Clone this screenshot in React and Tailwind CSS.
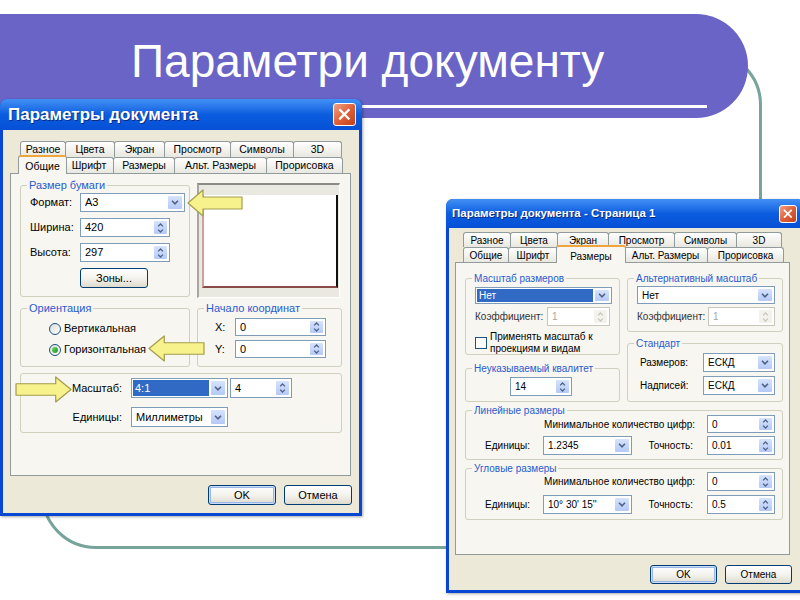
import React from "react";

const L1 = [
  ["Разное", "w-[46px]"],
  ["Цвета", "w-[50px]"],
  ["Экран", "w-[51px]"],
  ["Просмотр", "w-[67px]"],
  ["Символы", "w-[64px]"],
  ["3D", "w-[49px]"],
];
const L2 = [
  ["Общие", "w-[49px]", true],
  ["Шрифт", "w-[50px]"],
  ["Размеры", "w-[62px]"],
  ["Альт. Размеры", "w-[93px]"],
  ["Прорисовка", "w-[77px]"],
];
const R1 = [
  ["Разное", "w-[48px]"],
  ["Цвета", "w-[48px]"],
  ["Экран", "w-[52px]"],
  ["Просмотр", "w-[67px]"],
  ["Символы", "w-[63px]"],
  ["3D", "w-[46px]"],
];
const R2 = [
  ["Общие", "w-[46px]"],
  ["Шрифт", "w-[50px]"],
  ["Размеры", "w-[70px]", true],
  ["Альт. Размеры", "w-[85px]"],
  ["Прорисовка", "w-[77px]"],
];

function Chev({ up, className = "" }) {
  return (
    <svg viewBox="0 0 8 5" className={className}>
      <path
        d={up ? "M1 4.2L4 1.2L7 4.2" : "M1 0.8L4 3.8L7 0.8"}
        fill="none"
        stroke="currentColor"
        strokeWidth="1.6"
      />
    </svg>
  );
}

function Combo({ value, selected, className = "" }) {
  return (
    <div className={`flex items-stretch bg-white border border-[#7f9db9] p-[1px] ${className}`}>
      <div className="flex-1 flex items-stretch min-w-0">
        {selected ? (
          <span className="flex-1 flex items-center bg-[#316ac5] text-white pl-[2px] mr-[1px]">{value}</span>
        ) : (
          <span className="flex items-center pl-[3px] whitespace-nowrap">{value}</span>
        )}
      </div>
      <div className="w-[16px] shrink-0 flex items-center justify-center rounded-[2px] border border-white bg-gradient-to-b from-[#d6e3fd] to-[#b4c9f6] text-[#4d6185]">
        <Chev className="w-[8px] h-[5px]" />
      </div>
    </div>
  );
}

function Spin({ value, disabled, className = "" }) {
  return (
    <div
      className={`flex items-stretch bg-white border p-[1px] ${
        disabled ? "border-[#c9c7ba] text-[#aca899]" : "border-[#7f9db9]"
      } ${className}`}
    >
      <div className="flex-1 flex items-center pl-[3px]">{value}</div>
      <div
        className={`w-[15px] shrink-0 flex flex-col items-center justify-center gap-[2px] rounded-[2px] border border-white ${
          disabled ? "bg-[#f3f2ec] text-[#c9c7ba]" : "bg-gradient-to-b from-[#d6e3fd] to-[#b4c9f6] text-[#4d6185]"
        }`}
      >
        <Chev up className="w-[7px] h-[4px]" />
        <Chev className="w-[7px] h-[4px]" />
      </div>
    </div>
  );
}

function XpButton({ label, def, className = "" }) {
  return (
    <div
      className={`flex items-center justify-center rounded-[3px] border border-[#003c74] bg-gradient-to-b from-white via-[#f4f3ee] to-[#dedbcd] ${
        def ? "shadow-[inset_0_0_0_1px_#cddcf7,inset_0_0_0_2px_#98b6e8]" : ""
      } ${className}`}
    >
      {label}
    </div>
  );
}

function Group({ label, className = "", labelClass = "left-[6px] top-[-7px] leading-[12px]", children }) {
  return (
    <div className={`relative border border-[#d0d0bf] rounded-[3px] ${className}`}>
      {label && (
        <span className={`absolute px-[2px] bg-[#f7f6f1] text-[#2a5bd0] whitespace-nowrap ${labelClass}`}>{label}</span>
      )}
      {children}
    </div>
  );
}

function Radio({ checked }) {
  return (
    <div className="w-[12px] h-[12px] rounded-full border border-[#1c5180] bg-gradient-to-br from-[#dcdcd7] to-white flex items-center justify-center">
      {checked && <div className="w-[6px] h-[6px] rounded-full bg-gradient-to-br from-[#6ad86a] to-[#1a951a]" />}
    </div>
  );
}

function TabRow({ tabs, className = "", activeClass = "" }) {
  return (
    <div className={`flex items-end ${className}`}>
      {tabs.map(([label, w, active]) =>
        active ? (
          <div
            key={label}
            className={`relative z-10 -mx-[2px] -mb-px ${w} ${activeClass} flex justify-center pt-[2px] rounded-t-[3px] border-x border-[#919b9c] border-t-2 border-t-[#f0a43c] bg-[#f7f6f1]`}
          >
            {label}
          </div>
        ) : (
          <div
            key={label}
            className={`h-full ${w} -ml-px first:ml-0 flex items-center justify-center rounded-t-[3px] border border-b-0 border-[#919b9c] bg-gradient-to-b from-white to-[#e8e7e0] whitespace-nowrap`}
          >
            {label}
          </div>
        )
      )}
    </div>
  );
}

function TitleBar({ title, className = "", closeClass = "" }) {
  return (
    <div
      className={`shrink-0 flex items-center justify-between rounded-t-[7px] bg-gradient-to-b from-[#4290f5] via-[#0b5ddf] to-[#0650d6] ${className}`}
    >
      <span className="font-bold text-white whitespace-nowrap [text-shadow:1px_1px_0_#0b2a82]">{title}</span>
      <div
        className={`flex items-center justify-center rounded-[3px] border border-white bg-gradient-to-br from-[#f0a084] via-[#e06038] to-[#c2401c] ${closeClass}`}
      >
        <svg viewBox="0 0 12 12" className="w-[60%] h-[60%]">
          <path d="M2 2l8 8M10 2l-8 8" stroke="white" strokeWidth="2.2" strokeLinecap="square" />
        </svg>
      </div>
    </div>
  );
}

function Arrow({ className = "" }) {
  return (
    <svg viewBox="0 0 56 28" preserveAspectRatio="none" className={className}>
      <path
        d="M1 14 L16 1 L16 8 L55 8 L55 20 L16 20 L16 27 Z"
        fill="#f7f28c"
        stroke="#a39d4e"
        strokeWidth="1.2"
        strokeLinejoin="round"
      />
    </svg>
  );
}

function LeftDialog() {
  return (
    <div className="absolute left-0 top-[99px] w-[362px] h-[417px] rounded-t-[7px] bg-[#0847d2] flex flex-col shadow-[1px_1px_3px_rgba(0,0,0,0.35)]">
      <TitleBar title="Параметры документа" className="h-[31px] text-[17px] pl-[8px] pr-[6px]" closeClass="w-[23px] h-[23px]" />
      <div className="flex-1 mx-[3px] mb-[3px] bg-[#ece9d8] pl-[7px] pt-[11px] text-[11px] text-black">
        <TabRow tabs={L1} className="ml-[10px] h-[16px] text-[10.5px]" />
        <TabRow tabs={L2} className="ml-[10px] h-[16px] text-[10.5px]" activeClass="h-[19px]" />
        <div className="w-[341px] h-[303px] border border-[#919b9c] bg-[#f7f6f1] pt-[11px] pl-[9px]">
          <div className="flex gap-[7px]">
            <Group label="Размер бумаги" className="w-[170px] h-[112px] pl-[9px] pt-[7px] flex flex-col gap-[6px]">
              <div className="flex items-center">
                <span className="w-[50px]">Формат:</span>
                <Combo value="A3" className="w-[105px] h-[19px]" />
              </div>
              <div className="flex items-center">
                <span className="w-[50px]">Ширина:</span>
                <Spin value="420" className="w-[90px] h-[19px]" />
              </div>
              <div className="flex items-center">
                <span className="w-[50px]">Высота:</span>
                <Spin value="297" className="w-[90px] h-[19px]" />
              </div>
              <div className="pl-[50px]">
                <XpButton label="Зоны..." className="w-[68px] h-[20px]" />
              </div>
            </Group>
            <div className="w-[143px] h-[115px] -mt-[2px] border-t-2 border-l-2 border-t-[#8a8a86] border-l-[#a7a6a0] border-r border-b border-r-white border-b-white bg-[#e9e8e1] pt-[10px] pl-[3px] pr-[1px] pb-[9px]">
              <div className="w-full h-full bg-white border-l-2 border-l-[#d0a09e] border-b-2 border-b-[#8a4a48] border-r-2 border-r-[#111]" />
            </div>
          </div>
          <div className="flex gap-[7px] mt-[10px]">
            <Group label="Ориентация" className="w-[170px] h-[59px] pl-[28px] pt-[13px] flex flex-col gap-[8px]">
              <div className="flex items-center gap-[3px] h-[13px]">
                <Radio />
                <span>Вертикальная</span>
              </div>
              <div className="flex items-center gap-[3px] h-[13px]">
                <Radio checked />
                <span>Горизонтальная</span>
              </div>
            </Group>
            <Group label="Начало координат" className="w-[145px] h-[59px] pl-[17px] pt-[9px] flex flex-col gap-[4px]">
              <div className="flex items-center">
                <span className="w-[20px]">X:</span>
                <Spin value="0" className="w-[91px] h-[18px]" />
              </div>
              <div className="flex items-center">
                <span className="w-[20px]">Y:</span>
                <Spin value="0" className="w-[91px] h-[18px]" />
              </div>
            </Group>
          </div>
          <Group className="w-[322px] h-[60px] mt-[6px] pt-[4px] flex flex-col gap-[9px]">
            <div className="flex items-center">
              <span className="w-[101px] mr-[9px] text-right">Масштаб:</span>
              <Combo value="4:1" selected className="w-[97px] h-[20px]" />
              <Spin value="4" className="w-[62px] h-[20px] ml-[2px]" />
            </div>
            <div className="flex items-center">
              <span className="w-[101px] mr-[9px] text-right">Единицы:</span>
              <Combo value="Миллиметры" className="w-[97px] h-[20px]" />
            </div>
          </Group>
        </div>
        <div className="w-[342px] mt-[9px] flex justify-end gap-[8px]">
          <XpButton label="OK" def className="w-[68px] h-[20px]" />
          <XpButton label="Отмена" className="w-[68px] h-[20px]" />
        </div>
      </div>
    </div>
  );
}

function RightDialog() {
  const lbl = "left-[6px] top-[-6px] leading-[11px]";
  return (
    <div className="absolute left-[446px] top-[199px] w-[358px] h-[394px] rounded-t-[7px] bg-[#0847d2] flex flex-col shadow-[1px_1px_3px_rgba(0,0,0,0.35)]">
      <TitleBar title="Параметры документа - Страница 1" className="h-[29px] text-[11.5px] pl-[6px] pr-[7px]" closeClass="w-[18px] h-[18px]" />
      <div className="flex-1 mx-[3px] mb-[3px] bg-[#ece9d8] pl-[6px] pt-[4px] text-[10px] text-black">
        <TabRow tabs={R1} className="ml-[8px] h-[15px]" />
        <TabRow tabs={R2} className="ml-[8px] h-[15px]" activeClass="h-[18px]" />
        <div className="w-[335px] h-[293px] border border-[#919b9c] bg-[#f7f6f1] pt-[15px] pl-[9px] flex flex-col">
          <div className="flex gap-[7px]">
            <div className="flex flex-col w-[155px]">
              <Group label="Масштаб размеров" labelClass={lbl} className="h-[77px] pl-[9px] pt-[8px] flex flex-col">
                <Combo value="Нет" selected className="w-[137px] h-[17px]" />
                <div className="flex items-center mt-[3px]">
                  <span className="w-[72px] text-[#333]">Коэффициент:</span>
                  <Spin value="1" disabled className="w-[63px] h-[19px]" />
                </div>
                <div className="flex items-center gap-[3px] mt-[5px]">
                  <div className="w-[12px] h-[12px] border border-[#1c5180] bg-white" />
                  <span className="leading-[12px]">
                    Применять масштаб к
                    <br />
                    проекциям и видам
                  </span>
                </div>
              </Group>
              <Group label="Неуказываемый квалитет" labelClass={lbl} className="h-[34px] mt-[13px] pl-[44px] pt-[8px]">
                <Spin value="14" className="w-[62px] h-[19px]" />
              </Group>
            </div>
            <div className="flex flex-col w-[156px]">
              <Group label="Альтернативный масштаб" labelClass={lbl} className="h-[54px] pl-[9px] pt-[7px] flex flex-col">
                <Combo value="Нет" className="w-[138px] h-[18px]" />
                <div className="flex items-center mt-[3px]">
                  <span className="w-[71px] text-[#333]">Коэффициент:</span>
                  <Spin value="1" disabled className="w-[67px] h-[19px]" />
                </div>
              </Group>
              <Group label="Стандарт" labelClass={lbl} className="h-[59px] mt-[11px] pl-[12px] pt-[9px] flex flex-col gap-[4px]">
                <div className="flex items-center">
                  <span className="w-[63px]">Размеров:</span>
                  <Combo value="ЕСКД" className="w-[72px] h-[19px]" />
                </div>
                <div className="flex items-center">
                  <span className="w-[63px]">Надписей:</span>
                  <Combo value="ЕСКД" className="w-[72px] h-[19px]" />
                </div>
              </Group>
            </div>
          </div>
          <Group label="Линейные размеры" labelClass={lbl} className="w-[318px] h-[50px] mt-[8px] pt-[4px] flex flex-col gap-[3px]">
            <div className="flex items-center">
              <span className="w-[229px] mr-[12px] text-right">Минимальное количество цифр:</span>
              <Spin value="0" className="w-[68px] h-[18px]" />
            </div>
            <div className="flex items-center">
              <span className="w-[64px] mr-[13px] text-right">Единицы:</span>
              <Combo value="1.2345" className="w-[89px] h-[19px]" />
              <span className="w-[61px] mr-[14px] text-right">Точность:</span>
              <Spin value="0.01" className="w-[68px] h-[19px]" />
            </div>
          </Group>
          <Group label="Угловые размеры" labelClass={lbl} className="w-[318px] h-[52px] mt-[8px] pt-[3px] flex flex-col gap-[4px]">
            <div className="flex items-center">
              <span className="w-[229px] mr-[12px] text-right">Минимальное количество цифр:</span>
              <Spin value="0" className="w-[68px] h-[19px]" />
            </div>
            <div className="flex items-center">
              <span className="w-[64px] mr-[13px] text-right">Единицы:</span>
              <Combo value="10° 30' 15''" className="w-[89px] h-[19px]" />
              <span className="w-[61px] mr-[14px] text-right">Точность:</span>
              <Spin value="0.5" className="w-[68px] h-[19px]" />
            </div>
          </Group>
        </div>
        <div className="w-[337px] mt-[10px] flex justify-end gap-[8px]">
          <XpButton label="OK" def className="w-[67px] h-[19px]" />
          <XpButton label="Отмена" className="w-[67px] h-[19px]" />
        </div>
      </div>
    </div>
  );
}

export default function App() {
  return (
    <div className="relative w-[800px] h-[600px] overflow-hidden bg-white font-['Liberation_Sans',Arial,sans-serif]">
      {/* рамка слайда */}
      <div className="absolute left-[41px] top-[50px] w-[721px] h-[499px] rounded-[55px] border-[3px] border-[#76a39a]" />

      {/* заголовок */}
      <div className="relative mt-[14px] w-[748px] h-[104px] rounded-r-[52px] bg-[#6964c6] flex flex-col">
        <h1 className="mt-[24px] pl-[131px] text-[46px] leading-[46px] text-white">Параметри документу</h1>
        <div className="mt-[21px] ml-[30px] w-[677px] h-[3px] bg-white" />
      </div>

      <LeftDialog />
      <RightDialog />

      <Arrow className="absolute left-[187px] top-[189px] w-[56px] h-[28px]" />
      <Arrow className="absolute left-[148px] top-[335px] w-[57px] h-[27px]" />
      <Arrow className="absolute left-[15px] top-[376px] w-[57px] h-[27px] -scale-x-100" />
    </div>
  );
}
